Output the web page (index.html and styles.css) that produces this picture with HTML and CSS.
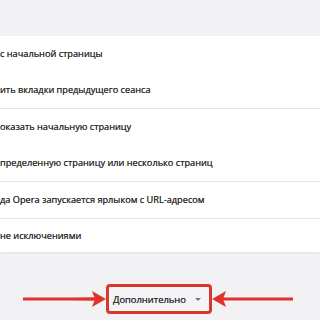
FILE: index.html
```html
<!DOCTYPE html>
<html lang="ru">
<head>
    <meta charset="UTF-8">
    <title>Настройки</title>
    <link rel="stylesheet" href="styles.css">
</head>
<body>

<div class="top-band"></div>

<div class="card">
    <div class="group">
        <div class="row">с начальной страницы</div>
        <div class="row">ить вкладки предыдущего сеанса</div>
    </div>
    <div class="group">
        <div class="row">оказать начальную страницу</div>
        <div class="row">пределенную страницу или несколько страниц</div>
    </div>
    <div class="group">
        <div class="row">да Opera запускается ярлыком с URL-адресом</div>
    </div>
    <div class="group">
        <div class="row last">не исключениями</div>
    </div>
</div>

<div class="more-area">
    <svg class="arrow" width="84" height="24" viewBox="0 0 84 24">
        <!-- стрелка вправо -->
        <path d="M1 12 L72 10.5 L72 13.5 Z" fill="#e0332b"/>
        <path d="M70 4 L84 12 L70 20 L73 12 Z" fill="#e0332b"/>
        <rect x="1" y="10.5" width="72" height="3" fill="#e0332b"/>
    </svg>
    <button class="more-button">
        <span>Дополнительно</span>
        <span class="caret"></span>
    </button>
    <svg class="arrow" width="82" height="24" viewBox="0 0 82 24">
        <!-- стрелка влево -->
        <rect x="10" y="10.5" width="71" height="3" fill="#e0332b"/>
        <path d="M14 4 L0 12 L14 20 L11 12 Z" fill="#e0332b"/>
    </svg>
</div>

</body>
</html>
```

FILE: styles.css
```css
body {
    margin: 0;
    background: #f2f2f4;
    font-family: 'Open Sans', 'Noto Sans', sans-serif;
    color: #333;
}

.top-band {
    height: 36px;
}

.card {
    background: #ffffff;
    box-shadow: 0 1px 2px rgba(0, 0, 0, 0.08);
}

.group + .group {
    border-top: 1px solid #e6e6e6;
}

.row {
    height: 36px;
    line-height: 36px;
    font-size: 9.2px;
    white-space: nowrap;
    overflow: hidden;
    text-shadow: 0 0 0.4px #333;
}

.row.last {
    height: 33px;
    line-height: 33px;
}

.more-area {
    display: flex;
    align-items: center;
    padding-top: 32px;
}

.arrow {
    display: block;
}

.arrow:first-child {
    margin-left: 22px;
}

.more-button {
    display: flex;
    align-items: center;
    justify-content: space-between;
    width: 106px;
    height: 30px;
    padding: 0 8px 0 4px;
    box-sizing: border-box;
    border: 3px solid #d9362d;
    border-radius: 4px;
    background: #f4f4f6;
    font-family: 'Open Sans', 'Noto Sans', sans-serif;
    font-size: 9.4px;
    color: #333;
    text-shadow: 0 0 0.4px #333;
    cursor: pointer;
}

.caret {
    width: 0;
    height: 0;
    border-left: 3.5px solid transparent;
    border-right: 3.5px solid transparent;
    border-top: 3.5px solid #777;
}
```
